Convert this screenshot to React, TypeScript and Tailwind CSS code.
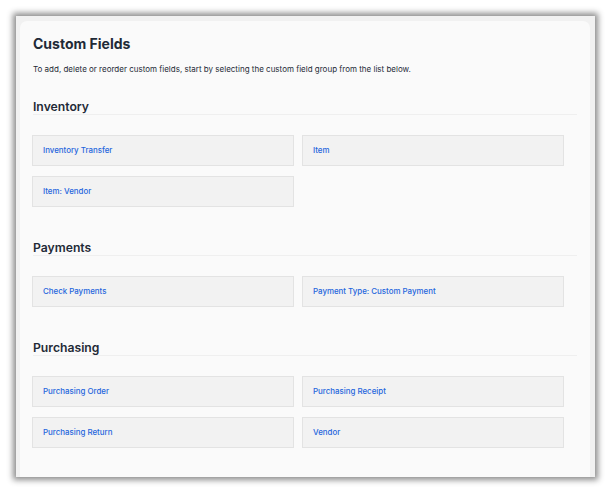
import React from 'react';

const SECTIONS: { title: string; items: string[] }[] = [
  { title: 'Inventory', items: ['Inventory Transfer', 'Item', 'Item: Vendor'] },
  { title: 'Payments', items: ['Check Payments', 'Payment Type: Custom Payment'] },
  {
    title: 'Purchasing',
    items: ['Purchasing Order', 'Purchasing Receipt', 'Purchasing Return', 'Vendor'],
  },
];

const FieldGroup: React.FC<{ title: string; items: string[]; first?: boolean }> = ({ title, items, first }) => (
  <section className={first ? 'mt-[25px]' : 'mt-[34px]'}>
    <h2 className="text-[12.2px] leading-[14px] font-semibold text-[#1f2a37] border-b border-[#efefef]">
      {title}
    </h2>
    <div className="mt-[20px] -ml-px w-[532px] grid grid-cols-2 gap-x-[8px] gap-y-[10px]">
      {items.map((item) => (
        <a
          key={item}
          href="#"
          className="h-[31px] flex items-center pl-[10px] bg-[#f2f2f2] border border-[#e3e3e3] text-[7.9px] font-medium text-[#1f66dd]"
        >
          {item}
        </a>
      ))}
    </div>
  </section>
);

export default function App() {
  return (
    <div className="w-[612px] h-[492px] bg-white pt-[16px] pl-[16px]" style={{ fontFamily: 'Inter, "Noto Sans", sans-serif' }}>
      <div className="w-[579px] h-[461px] bg-[#f1f1f1] pt-[5px] pl-[4px] pr-[5px] shadow-[0_0_6px_3px_rgba(0,0,0,0.45)]">
        <div className="h-full bg-[#fafafa] rounded-t-[7px] pt-[14px] pl-[13px] pr-[13px]">
          <h1 className="text-[14px] leading-[18px] font-bold text-[#1f2a37]">Custom Fields</h1>
          <p className="mt-[10px] text-[8px] leading-[12px] text-[#1f2a37]">
            To add, delete or reorder custom fields, start by selecting the custom field group from the list below.
          </p>
          {SECTIONS.map((s, i) => (
            <FieldGroup key={s.title} title={s.title} items={s.items} first={i === 0} />
          ))}
        </div>
      </div>
    </div>
  );
}
